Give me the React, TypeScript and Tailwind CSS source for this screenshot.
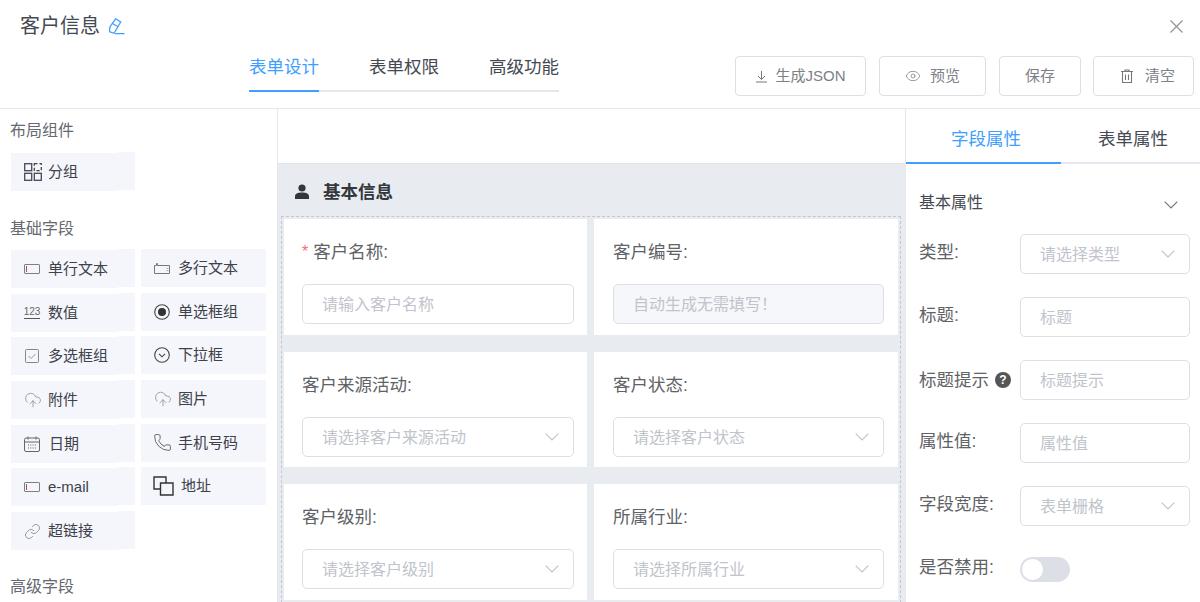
import { CloudUpload, Eye, Link, Phone } from "lucide-react";
import type { ReactNode } from "react";

const font = "font-['Liberation_Sans','Noto_Sans_CJK_SC',sans-serif]";

const Chevron = ({ color = "#c0c4cc" }: { color?: string }) => (
  <svg width="14" height="8" viewBox="0 0 14 8" fill="none" stroke={color} strokeWidth="1.2">
    <path d="M0.7 0.7L7 7l6.3-6.3" />
  </svg>
);

const TextIcon = () => (
  <svg width="16" height="10" viewBox="0 0 16 10" fill="none" stroke="#7d8087" strokeWidth="1">
    <rect x="0.5" y="0.5" width="15" height="9" rx="0.5" />
    <path d="M2.5 2v6" stroke="#a55" />
  </svg>
);
const AreaIcon = () => (
  <svg width="16" height="11" viewBox="0 0 16 11" fill="none" stroke="#777" strokeWidth="1">
    <path d="M0.5 2.5h2v-2h1v2h12v8h-15z" />
    <path d="M12.5 4.8l1 1 1-1M12.5 8.2l1-1 1 1" strokeWidth="0.7" />
  </svg>
);
const RadioIcon = () => (
  <svg width="16" height="16" viewBox="0 0 16 16" fill="none">
    <circle cx="8" cy="8" r="7.3" stroke="#444" strokeWidth="1.1" />
    <circle cx="8" cy="8" r="4" fill="#333" />
  </svg>
);
const CheckIcon = () => (
  <svg width="16" height="16" viewBox="0 0 16 16" fill="none" stroke="#888" strokeWidth="1">
    <rect x="1.5" y="1.5" width="13" height="13" rx="1" />
    <path d="M4.5 8l2.5 2.5 4.5-4.5" stroke="#999" />
  </svg>
);
const SelectIcon = () => (
  <svg width="16" height="16" viewBox="0 0 16 16" fill="none" stroke="#444" strokeWidth="1.1">
    <circle cx="8" cy="8" r="7.3" />
    <path d="M5 6.8l3 3 3-3" />
  </svg>
);
const DateIcon = () => (
  <svg width="16" height="16" viewBox="0 0 16 16" fill="none" stroke="#666" strokeWidth="1">
    <rect x="0.5" y="2" width="15" height="13.5" rx="1.5" />
    <path d="M0.5 6h15M4 0.5v3M12 0.5v3" />
    <path d="M4 9h8M4 12h8" strokeDasharray="1 1.3" />
  </svg>
);
const NumberIcon = () => (
  <span className="flex h-[16px] w-[16px] flex-col items-center justify-center">
    <span className="border-b border-[#555] pb-px text-[10px] leading-[10px] text-[#666]">123</span>
  </span>
);
const GroupIcon = () => (
  <svg width="18" height="18" viewBox="0 0 18 18" fill="none" stroke="#444a55" strokeWidth="1.3">
    <rect x="0.7" y="0.7" width="7" height="7" />
    <rect x="10.3" y="0.7" width="7" height="7" strokeDasharray="3.2 2" />
    <rect x="0.7" y="10.3" width="7" height="7" />
    <rect x="10.3" y="10.3" width="7" height="7" />
  </svg>
);
const AddressIcon = () => (
  <svg width="21" height="20" viewBox="0 0 21 20" fill="none" stroke="#333" strokeWidth="1.4">
    <path d="M7 13H1V1h12v6" />
    <path d="M7.5 7H20v12H7.5z" />
  </svg>
);

type Field = { icon: ReactNode; label: string; gap?: string; ml?: string };

const layoutField: Field = { icon: <GroupIcon />, label: "分组", gap: "gap-[6px]" };

const basicFields: Field[] = [
  { icon: <TextIcon />, label: "单行文本" },
  { icon: <AreaIcon />, label: "多行文本" },
  { icon: <NumberIcon />, label: "数值" },
  { icon: <RadioIcon />, label: "单选框组" },
  { icon: <CheckIcon />, label: "多选框组" },
  { icon: <SelectIcon />, label: "下拉框" },
  { icon: <CloudUpload size={18} strokeWidth={1} color="#888" />, label: "附件", gap: "gap-[6px]" },
  { icon: <CloudUpload size={18} strokeWidth={1} color="#888" />, label: "图片", gap: "gap-[6px]" },
  { icon: <DateIcon />, label: "日期", gap: "gap-[9px]" },
  { icon: <Phone size={19} strokeWidth={1.1} color="#555" />, label: "手机号码", gap: "gap-[6px]", ml: "-ml-px" },
  { icon: <TextIcon />, label: "e-mail" },
  { icon: <AddressIcon />, label: "地址", gap: "gap-[7px]", ml: "-ml-px" },
  { icon: <Link size={17} strokeWidth={1} color="#777" />, label: "超链接", gap: "gap-[7px]" },
];

const Chip = ({ field, shifted }: { field: Field; shifted: boolean }) => (
  <div
    className={
      shifted
        ? "relative h-[38px] w-[124px] bg-[#f4f6fb] before:absolute before:left-0 before:top-px before:h-[38px] before:w-[107px] before:bg-[#f4f6fb] after:absolute after:left-0 after:top-0 after:h-px after:w-[107px] after:bg-white"
        : "relative h-[38px] w-[125px] bg-[#f4f6fb]"
    }
  >
    <div
      className={
        "relative z-10 flex h-full items-center pl-[13px] text-[15px] leading-[20px] text-[#3d4149] " +
        (shifted ? "pt-[2px] " : "") +
        (field.gap ?? "gap-[8px]")
      }
    >
      <span className={"flex shrink-0 items-center " + (field.ml ?? "")}>{field.icon}</span>
      <span>{field.label}</span>
    </div>
  </div>
);

const Placeholder = ({ text, select, disabled }: { text: string; select?: boolean; disabled?: boolean }) => (
  <div
    className={
      "flex h-[40px] items-center justify-between rounded-[5px] border border-[#dcdfe6] pl-[19px] pr-[14px] text-[16px] leading-[22px] text-[#c0c4cc] " +
      (disabled ? "bg-[#f5f7fa]" : "bg-white")
    }
  >
    <span className="pt-[2px]">{text}</span>
    {select && <Chevron />}
  </div>
);

const FormCard = ({ label, placeholder, select, required, disabled }: { label: string; placeholder: string; select?: boolean; required?: boolean; disabled?: boolean }) => (
  <div className="h-[115.5px] bg-white pt-[20px] odd:pl-[18px] odd:pr-[13px] even:pl-[19px] even:pr-[14px]">
    <div className="mb-[21px] flex h-[24px] items-center pt-[2px] text-[17.5px] leading-[24px] text-[#606266]">
      {required && <span className="mr-[5px] text-[16px] text-[#f56c6c]">*</span>}
      {label}
    </div>
    <Placeholder text={placeholder} select={select} disabled={disabled} />
  </div>
);

const PropRow = ({ label, placeholder, select, help }: { label: string; placeholder: string; select?: boolean; help?: boolean }) => (
  <div className="mb-[23px] flex h-[40px] items-center">
    <div className={"flex w-[101px] shrink-0 items-center gap-[6px] text-[17.5px] leading-[22px] text-[#606266] " + (help ? "" : "pb-[4px]")}>
      {label}
      {help && (
        <span className="flex h-[16px] w-[16px] items-center justify-center rounded-full bg-[#555] text-[12px] font-bold leading-none text-white">?</span>
      )}
    </div>
    <div className="w-[170px]">
      <Placeholder text={placeholder} select={select} />
    </div>
  </div>
);

const Button = ({ icon, label, cls }: { icon?: ReactNode; label: string; cls: string }) => (
  <div className={"flex h-[40px] items-center justify-center rounded-[4px] border border-[#dcdfe6] bg-white text-[15px] leading-[20px] text-[#7d8087] " + cls}>
    {icon}
    <span>{label}</span>
  </div>
);

export default function App() {
  return (
    <div className={"flex h-[602px] w-[1200px] flex-col overflow-hidden bg-white " + font}>
      <header className="h-[109px] shrink-0 border-b border-[#e4e7ed]">
        <div className="flex h-[52px] items-center justify-between pl-[20px] pr-[17px]">
          <div className="flex items-center gap-[9px] text-[20px] leading-[28px] text-[#454a52]">
            客户信息
            <svg width="16" height="17" viewBox="0 0 16 17" fill="none" stroke="#409eff" strokeWidth="1.3">
              <path d="M6.7 0.8l5 3.2L5 15.3l-4.6-1.6 0.6-5z" />
              <path d="M3 5.3l6.3 3.4M6 15.7h9.5" />
            </svg>
          </div>
          <svg width="13" height="13" viewBox="0 0 13 13" fill="none" stroke="#909399" strokeWidth="1.2">
            <path d="M0.5 0.5l12 12M12.5 0.5l-12 12" />
          </svg>
        </div>
        <div className="flex items-start justify-between pl-[249px] pr-[6px]">
          <div className="mt-[1px] flex h-[39px] gap-[50px] border-b-2 border-[#e4e7ed]">
            <div className="-mb-[2px] h-[39px] border-b-2 border-[#409eff] text-[17.5px] leading-[28px] text-[#409eff]">表单设计</div>
            <div className="text-[17.5px] leading-[28px] text-[#454a52]">表单权限</div>
            <div className="text-[17.5px] leading-[28px] text-[#454a52]">高级功能</div>
          </div>
          <div className="mt-[4px] flex gap-[13px]">
            <Button
              cls="w-[131px] gap-[7px]"
              label="生成JSON"
              icon={
                <svg width="13" height="13" viewBox="0 0 13 13" fill="none" stroke="#777" strokeWidth="1">
                  <path d="M6.5 1v8M3 6l3.5 3.5L10 6M1 12h11" />
                </svg>
              }
            />
            <Button cls="w-[107px] gap-[9px]" label="预览" icon={<Eye size={16} strokeWidth={1.1} color="#777" />} />
            <Button cls="w-[82px]" label="保存" />
            <Button
              cls="-ml-px w-[101px] gap-[11px] pl-[8px]"
              label="清空"
              icon={
                <svg width="14" height="14" viewBox="0 0 14 14" fill="none" stroke="#777" strokeWidth="1.1">
                  <path d="M1 2.5h12M2.5 2.5v11h9v-11M5 2.5V1h4v1.5M5.5 5.5v5.5M8.5 5.5v5.5" />
                </svg>
              }
            />
          </div>
        </div>
      </header>

      <main className="flex min-h-0 flex-1">
        <aside className="w-[278px] shrink-0 overflow-hidden border-r border-[#e4e7ed] pl-[10px]">
          <h3 className="mt-[11px] h-[22px] text-[16px] font-normal leading-[22px] text-[#666a70]">布局组件</h3>
          <div className="ml-px mt-[10px]">
            <Chip field={layoutField} shifted />
          </div>
          <h3 className="mt-[28px] h-[22px] text-[16px] font-normal leading-[22px] text-[#666a70]">基础字段</h3>
          <div className="ml-px mt-[9px] grid grid-cols-[124px_125px] gap-x-[6px] gap-y-[5.7px]">
            {basicFields.map((f, i) => (
              <Chip key={f.label} field={f} shifted={i % 2 === 0} />
            ))}
          </div>
          <h3 className="mt-[27px] h-[22px] text-[16px] font-normal leading-[22px] text-[#666a70]">高级字段</h3>
        </aside>

        <section className="w-[627px] shrink-0 overflow-hidden bg-[#e8ecf0]">
          <div className="h-[55px] border-b border-[#dfe3e8] bg-white" />
          <div className="flex h-[52px] items-center gap-[14px] pl-[17px] pt-[3px] text-[17.5px] font-bold leading-[24px] text-[#33373d]">
            <svg width="14" height="15" viewBox="0 0 14 15" fill="#33373d">
              <circle cx="7" cy="4" r="3.6" />
              <path d="M0 15v-2.5C0 10 2.5 8.6 7 8.6s7 1.4 7 3.9V15z" />
            </svg>
            基本信息
          </div>
          <div className="ml-[3px] mr-[4px] border border-dashed border-[#c4c8cd] p-[2px]">
            <div className="grid grid-cols-[303px_304px] gap-x-[7px] gap-y-[17px]">
              <FormCard label="客户名称:" placeholder="请输入客户名称" required />
              <FormCard label="客户编号:" placeholder="自动生成无需填写！" disabled />
              <FormCard label="客户来源活动:" placeholder="请选择客户来源活动" select />
              <FormCard label="客户状态:" placeholder="请选择客户状态" select />
              <FormCard label="客户级别:" placeholder="请选择客户级别" select />
              <FormCard label="所属行业:" placeholder="请选择所属行业" select />
            </div>
          </div>
        </section>

        <aside className="flex-1 overflow-hidden border-l border-[#e4e7ed]">
          <div className="flex h-[55px] border-b-2 border-[#e4e7ed]">
            <div className="-mb-[2px] flex h-[55px] w-[155px] shrink-0 items-center justify-center border-b-2 border-[#409eff] pl-[5px] pt-[8px] text-[17.5px] text-[#409eff]">字段属性</div>
            <div className="flex h-[53px] flex-1 items-center justify-center pl-[5px] pt-[8px] text-[17.5px] text-[#454a52]">表单属性</div>
          </div>
          <div className="pl-[13px] pr-[10px]">
            <div className="mb-[20px] mt-[28px] flex h-[22px] items-center justify-between pr-[12px] text-[16px] leading-[22px] text-[#454a52]">
              基本属性
              <span className="pt-[4px]">
                <Chevron color="#777" />
              </span>
            </div>
            <PropRow label="类型:" placeholder="请选择类型" select />
            <PropRow label="标题:" placeholder="标题" />
            <PropRow label="标题提示" placeholder="标题提示" help />
            <PropRow label="属性值:" placeholder="属性值" />
            <PropRow label="字段宽度:" placeholder="表单栅格" select />
            <div className="mt-[31px] flex h-[25px] items-center">
              <div className="w-[101px] shrink-0 pb-[6px] text-[17.5px] leading-[22px] text-[#606266]">是否禁用:</div>
              <div className="flex h-[25px] w-[50px] items-center rounded-full bg-[#dcdfe6] pl-[2px]">
                <div className="h-[21px] w-[21px] rounded-full bg-white" />
              </div>
            </div>
          </div>
        </aside>
      </main>
    </div>
  );
}
